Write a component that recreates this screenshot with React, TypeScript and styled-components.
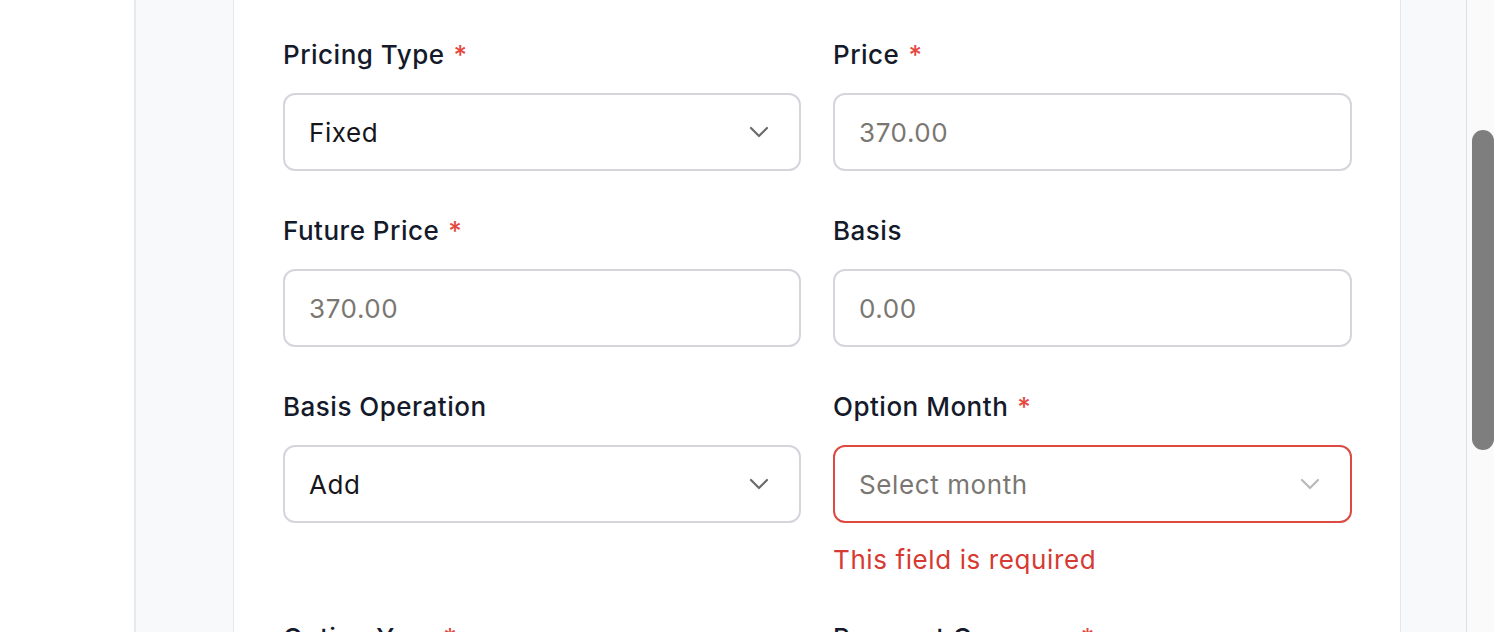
import React from "react";
import styled, { createGlobalStyle } from "styled-components";

const GlobalStyle = createGlobalStyle`
  html, body {
    margin: 0;
    padding: 0;
    background: #ffffff;
    font-family: Inter, "Noto Sans", sans-serif;
    overflow: hidden;
  }
  * {
    box-sizing: border-box;
  }
`;

type FieldDef = {
  label: string;
  required?: boolean;
  kind: "select" | "input";
  value?: string;
  placeholder?: string;
  error?: string;
};

const fields: FieldDef[] = [
  { label: "Pricing Type", required: true, kind: "select", value: "Fixed" },
  { label: "Price", required: true, kind: "input", placeholder: "370.00" },
  { label: "Future Price", required: true, kind: "input", placeholder: "370.00" },
  { label: "Basis", kind: "input", placeholder: "0.00" },
  { label: "Basis Operation", kind: "select", value: "Add" },
  {
    label: "Option Month",
    required: true,
    kind: "select",
    placeholder: "Select month",
    error: "This field is required",
  },
  { label: "Option Year", required: true, kind: "select", value: "" },
  { label: "Payment Currency", required: true, kind: "select", value: "" },
];

const Chevron: React.FC<{ muted?: boolean }> = ({ muted }) => (
  <ChevronSvg width="20" height="12" viewBox="0 0 20 12" fill="none">
    <polyline
      points="2,2 10,10 18,2"
      stroke={muted ? "#b9b9b9" : "#6b6b6b"}
      strokeWidth="2.2"
      strokeLinecap="round"
      strokeLinejoin="round"
    />
  </ChevronSvg>
);

const Field: React.FC<{ field: FieldDef }> = ({ field }) => {
  const hasError = !!field.error;
  return (
    <FieldBox>
      <Label>
        {field.label}
        {field.required && <Star>*</Star>}
      </Label>
      <Control $error={hasError}>
        {field.value ? (
          <Value>{field.value}</Value>
        ) : (
          <Placeholder>{field.placeholder}</Placeholder>
        )}
        {field.kind === "select" && <Chevron muted={hasError} />}
      </Control>
      {hasError && <ErrorText>{field.error}</ErrorText>}
    </FieldBox>
  );
};

export default function App() {
  return (
    <>
      <GlobalStyle />
      <Page>
        <Gutter />
        <Panel>
          <Card>
            <FormGrid>
              {fields.map((f) => (
                <Field key={f.label} field={f} />
              ))}
            </FormGrid>
          </Card>
        </Panel>
        <ScrollTrack>
          <ScrollThumb />
        </ScrollTrack>
      </Page>
    </>
  );
}

const Page = styled.div`
  display: grid;
  grid-template-columns: 134px 1333px 27px;
  height: 632px;
  overflow: hidden;
`;

const Gutter = styled.div`
  background: #ffffff;
`;

const Panel = styled.div`
  background: #f8f9fb;
  border-left: 2px solid #e8e9ee;
  border-right: 1px solid #dedede;
  padding-left: 97px;
  overflow: hidden;
`;

const Card = styled.div`
  width: 1168px;
  min-height: 700px;
  background: #ffffff;
  border-left: 1px solid #e5e7eb;
  border-right: 1px solid #e5e7eb;
  padding: 39px 48px 0 49px;
`;

const FormGrid = styled.div`
  display: grid;
  grid-template-columns: 518px 519px;
  column-gap: 32px;
  row-gap: 44px;
  align-items: start;
`;

const FieldBox = styled.div`
  display: flex;
  flex-direction: column;
`;

const Label = styled.div`
  font-size: 26px;
  line-height: 32px;
  font-weight: 500;
  letter-spacing: 0.5px;
  color: #151a2b;
  margin-bottom: 22px;
  white-space: nowrap;
`;

const Star = styled.span`
  color: #e5483f;
  margin-left: 9px;
`;

const Control = styled.div<{ $error?: boolean }>`
  height: 78px;
  border: 2px solid ${(p) => (p.$error ? "#dc4a42" : "#d4d6db")};
  border-radius: 12px;
  background: #ffffff;
  display: flex;
  align-items: center;
  padding: 0 30px 0 24px;
  font-size: 26px;
  letter-spacing: 0.6px;
`;

const Value = styled.span`
  flex: 1;
  color: #16161a;
`;

const Placeholder = styled.span`
  flex: 1;
  color: #7a7772;
`;

const ChevronSvg = styled.svg`
  flex: none;
  display: block;
`;

const ErrorText = styled.div`
  margin-top: 21px;
  margin-bottom: 2px;
  font-size: 26px;
  line-height: 32px;
  letter-spacing: 0.6px;
  color: #d63a33;
`;

const ScrollTrack = styled.div`
  background: #fafafa;
  padding: 130px 0 0 5px;
`;

const ScrollThumb = styled.div`
  width: 22px;
  height: 320px;
  background: #7e7e7e;
  border-radius: 11px;
`;
